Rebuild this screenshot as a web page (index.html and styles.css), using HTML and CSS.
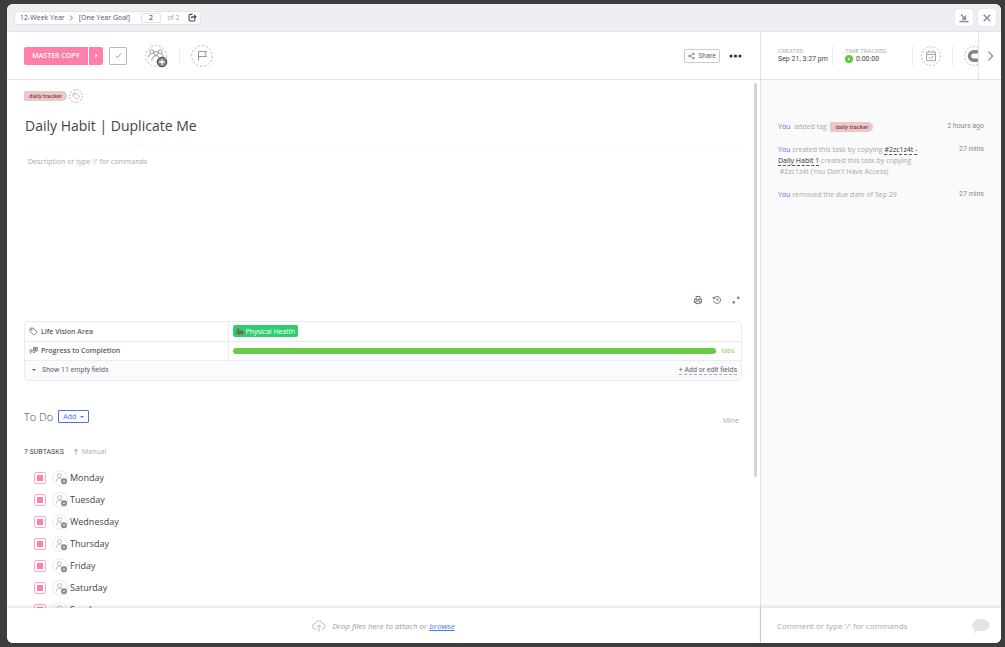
FILE: index.html
```html
<!DOCTYPE html>
<html lang="en">
<head>
    <meta charset="UTF-8">
    <meta name="viewport" content="width=device-width, initial-scale=1.0">
    <title>Daily Habit | Duplicate Me</title>
    <link rel="stylesheet" href="styles.css">
</head>
<body>
    <!-- Shared icons -->
    <svg class="sprite" aria-hidden="true">
        <symbol id="person" viewBox="0 0 16 16">
            <circle cx="8" cy="8" r="7.3" stroke="#cfcfcf" stroke-dasharray="1.6 1.3" stroke-width=".8"/>
            <circle cx="7.5" cy="5.6" r="2" stroke="#b5b5b5" stroke-width=".9"/>
            <path d="M4.4 11.5c0-2 1.2-3.4 3.1-3.4 1 0 1.9.4 2.4 1.1" stroke="#b5b5b5" stroke-width=".9"/>
            <circle cx="12" cy="11.2" r="3" fill="#858585"/>
            <path d="M12 9.7v3M10.5 11.2h3" stroke="#ddd" stroke-width=".9"/>
        </symbol>
        <symbol id="tag" viewBox="0 0 16 16">
            <path d="M1.5 3.2v4.3l6.8 6.3c.5.5 1.2.5 1.7 0l4-4c.5-.5.5-1.2 0-1.7L7.2 1.900H2.800c-.7 0-1.300.6-1.300 1.300z"/>
            <circle cx="4.8" cy="5" r="1"/>
        </symbol>
    </svg>

    <div class="modal">
        <header class="topbar">
            <nav class="crumbs">
                <a href="#">12-Week Year</a>
                <svg class="crumb-arrow" viewBox="0 0 6 8"><path d="M2 1.500L4.500 4 2 6.500"/></svg>
                <a href="#">[One Year Goal]</a>
                <input class="page-number" type="text" value="2" aria-label="Task number">
                <span class="page-total">of 2</span>
                <button class="icon-btn" aria-label="Move task">
                    <svg class="move-icon" viewBox="0 0 10 10"><path d="M5 1.500H2.500Q1.200 1.500 1.200 2.800v4.700q0 1.300 1.300 1.300h4q1.300 0 1.300-1.300V7M4.300 6V4.300H8.500M6.800 2.200l2 2.100-2 2.100"/></svg>
                </button>
            </nav>
            <div class="window-buttons">
                <button aria-label="Minimize"><svg viewBox="0 0 12 12"><path d="M3 2.500l4 4M7.500 3.500v3.500H4M1.500 9.500h9"/></svg></button>
                <button aria-label="Close"><svg viewBox="0 0 12 12"><path d="M2.700 2.700l6.600 6.600M9.300 2.700L2.700 9.300"/></svg></button>
            </div>
        </header>

        <main class="task">
            <div class="toolbar">
                <div class="status">
                    <button class="status-name">MASTER COPY</button>
                    <button class="status-next" aria-label="Next status"><svg viewBox="0 0 4 6"><path d="M.5.500L3.500 3 .5 5.500z"/></svg></button>
                </div>
                <button class="complete" aria-label="Mark complete"><svg viewBox="0 0 10 10"><path d="M2 5.300l2 2 4-4.800"/></svg></button>
                <button class="icon-btn assignees" aria-label="Assign">
                    <svg viewBox="0 0 26 26">
                        <circle cx="12" cy="13" r="10.500" stroke="#bbb" stroke-dasharray="2.200 1.800"/>
                        <g stroke="#8d8d8d" stroke-width=".9">
                            <circle cx="7.700" cy="8.700" r="1.900"/>
                            <circle cx="16.300" cy="8.700" r="1.900"/>
                            <circle cx="12" cy="10.300" r="2.100"/>
                            <path d="M4.500 14.500c0-2 1-3.400 2.700-3.600M19.500 14.500c0-2-1-3.400-2.700-3.600M7.800 17.500c0-2.800 1.700-4.700 4.200-4.700 1.200 0 2.200.5 3 1.300"/>
                        </g>
                        <circle cx="18" cy="19" r="4.800" fill="#858585"/>
                        <path d="M18 16.300v5.400M15.300 19h5.400" stroke="#fff" stroke-width="1.300"/>
                    </svg>
                </button>
                <span class="divider"></span>
                <button class="icon-btn priority" aria-label="Set priority">
                    <svg viewBox="0 0 22 22">
                        <circle cx="11" cy="11" r="10.300" stroke="#bbb" stroke-dasharray="2.200 1.800"/>
                        <path d="M7.500 15.500v-9h8l-1.600 2.500 1.600 2.500h-8" stroke="#999"/>
                    </svg>
                </button>
                <button class="share">
                    <svg viewBox="0 0 8 8"><circle cx="1.500" cy="4" r="1"/><circle cx="6.300" cy="1.500" r="1"/><circle cx="6.300" cy="6.500" r="1"/><path d="M2.500 3.500l2.900-1.500M2.500 4.500l2.900 1.500"/></svg>
                    Share
                </button>
                <button class="icon-btn more" aria-label="More">
                    <svg viewBox="0 0 14 4"><circle cx="2.200" cy="2" r="1.700"/><circle cx="7" cy="2" r="1.700"/><circle cx="11.800" cy="2" r="1.700"/></svg>
                </button>
            </div>

            <div class="scroll-area">
                <div class="content">
                    <div class="tags">
                        <span class="tag">daily tracker</span>
                        <button class="icon-btn add-tag" aria-label="Add tag">
                            <svg viewBox="0 0 14 14">
                                <circle cx="7" cy="7" r="6.400" stroke="#aaa" stroke-dasharray="1.800 1.500" stroke-width=".9"/>
                                <use href="#tag" x="3.200" y="3.200" width="8" height="8" stroke="#b5b5b5" stroke-width="1.700"/>
                            </svg>
                        </button>
                    </div>
                    <h1>Daily Habit | Duplicate Me</h1>
                    <textarea class="description" placeholder="Description or type '/' for commands" aria-label="Description"></textarea>

                    <div class="desc-actions">
                        <button class="icon-btn" aria-label="Print"><svg viewBox="0 0 10 10"><path d="M3 4V1.500h4V4M3 7.500H1.400V4.300h7.200v3.200H7M3 6h4v2.600H3z"/></svg></button>
                        <button class="icon-btn" aria-label="History"><svg viewBox="0 0 10 10"><path d="M1.900 3.300A3.500 3.500 0 1 1 1.600 5.800M1.300 1.700v1.900h2M5 3.200v2h1.600"/></svg></button>
                        <button class="icon-btn" aria-label="Expand"><svg viewBox="0 0 10 10"><path d="M6 2.100h2v2M8 2.100L6 4.100M4 8H2V6M2 8l2-2"/></svg></button>
                    </div>

                    <div class="fields">
                        <table>
                            <tr>
                                <th scope="row"><span class="field-name"><svg class="field-icon" viewBox="0 0 16 16"><use href="#tag"/></svg>Life Vision Area</span></th>
                                <td>
                                    <span class="label">
                                        <svg viewBox="0 0 10 8"><path d="M1.500 1L3.500.300l.8 1.200-1.200.8.500 1.400c1.600-1.200 4.600-1.100 5.600.2.900 1.500.4 3.300-1 3.600H2C.8 7.200.4 6 .7 4.500z"/></svg>
                                        Physical Health
                                    </span>
                                </td>
                            </tr>
                            <tr>
                                <th scope="row"><span class="field-name"><svg class="field-icon" viewBox="0 0 16 16"><path d="M4.500 7a2 2 0 1 0 0 3M5.200 6v5M8 2.500h6.500V9H8zM8 5.500h6.500M11.200 2.500V9M1 12.500h3M7 11.500h4"/></svg>Progress to Completion</span></th>
                                <td>
                                    <div class="progress">
                                        <div class="track"><div class="bar" style="width: 100%"></div></div>
                                        <span>100%</span>
                                    </div>
                                </td>
                            </tr>
                        </table>
                        <div class="fields-footer">
                            <button class="show-empty"><span class="caret"></span>Show 11 empty fields</button>
                            <button class="edit-fields">+ Add or edit fields</button>
                        </div>
                    </div>

                    <div class="todo-head">
                        <h2>To Do</h2>
                        <button class="add">Add <span class="caret"></span></button>
                        <button class="mine">Mine</button>
                    </div>
                    <div class="subtasks-head">
                        <h3>7 SUBTASKS</h3>
                        <button class="sort"><svg viewBox="0 0 6 8"><path d="M3 6.500V1M.8 3L3 1l2.200 2"/></svg>Manual</button>
                    </div>
                    <ul class="subtasks">
                        <li><input type="checkbox" id="mon" checked><svg><use href="#person"/></svg><label for="mon">Monday</label></li>
                        <li><input type="checkbox" id="tue" checked><svg><use href="#person"/></svg><label for="tue">Tuesday</label></li>
                        <li><input type="checkbox" id="wed" checked><svg><use href="#person"/></svg><label for="wed">Wednesday</label></li>
                        <li><input type="checkbox" id="thu" checked><svg><use href="#person"/></svg><label for="thu">Thursday</label></li>
                        <li><input type="checkbox" id="fri" checked><svg><use href="#person"/></svg><label for="fri">Friday</label></li>
                        <li><input type="checkbox" id="sat" checked><svg><use href="#person"/></svg><label for="sat">Saturday</label></li>
                        <li><input type="checkbox" id="sun" checked><svg><use href="#person"/></svg><label for="sun">Sunday</label></li>
                    </ul>
                </div>
                <div class="scrollbar"><div class="thumb"></div></div>
            </div>

            <footer class="drop">
                <svg viewBox="0 0 14 12"><path d="M4.500 9H3.300a2.600 2.600 0 0 1-.3-5.200 4 4 0 0 1 7.700-.3A2.800 2.800 0 0 1 10.700 9H9.500M7 11.700V5M5 6.800L7 5l2 1.800"/></svg>
                <span>Drop files here to attach or <a href="#">browse</a></span>
            </footer>
        </main>

        <aside class="activity">
            <div class="info">
                <div class="info-item created">
                    <span class="info-label">CREATED</span>
                    <span>Sep 21, 3:27 pm</span>
                </div>
                <div class="info-item tracked">
                    <span class="info-label">TIME TRACKED</span>
                    <span class="time"><svg viewBox="0 0 8 8"><circle cx="4" cy="4" r="4" fill="#5fcb3c"/><path d="M3 2.500L5.300 4 3 5.500z" fill="#fff"/></svg>0:00:00</span>
                </div>
                <button class="icon-btn due" aria-label="Due date">
                    <svg viewBox="0 0 20 20"><circle cx="10" cy="10" r="9.400" stroke="#bbb" stroke-dasharray="2 1.600"/><path d="M5.500 6h9v8.700h-9zM5.500 8.500h9M7.700 4.500v2M12.300 4.500v2M7.800 11.300l1.600 1.500 2.900-2.900" stroke="#a5a5a5"/></svg>
                </button>
                <div class="clip">
                    <svg viewBox="0 0 20 20"><circle cx="10" cy="10" r="9.400" stroke="#bbb" stroke-dasharray="2 1.600"/><rect x="5.500" y="5.800" width="12" height="8.400" rx="4.200" stroke="#858585" stroke-width="3.400"/></svg>
                </div>
                <button class="next" aria-label="Show more"><svg viewBox="0 0 8 12"><path d="M1.500 1l5 5-5 5"/></svg></button>
            </div>
            <ul class="log">
                <li>
                    <p><a href="#">You</a>&nbsp; added tag &nbsp;<span class="tag">daily tracker</span></p>
                    <time>2 hours ago</time>
                </li>
                <li>
                    <p><a href="#">You</a> created this task by copying <a class="task-link" href="#">#2zc1z4t - Daily Habit 1</a> created this task by copying &nbsp;#2zc1z4t (You Don't Have Access)</p>
                    <time>27 mins</time>
                </li>
                <li>
                    <p><a href="#">You</a> removed the due date of Sep 29</p>
                    <time>27 mins</time>
                </li>
            </ul>
            <div class="comment">
                <input type="text" placeholder="Comment or type '/' for commands" aria-label="Comment">
                <svg viewBox="0 0 18 16"><path d="M9 1c4.900 0 8.700 2.700 8.700 6.200S13.900 13 9 13c-1 0-2-.1-2.900-.3-1.300 1.200-2.800 2-4.600 2.300.9-.9 1.300-1.900 1.300-3.400C1.200 10.400.3 8.900.3 7.200.3 3.700 4.100 1 9 1z"/></svg>
            </div>
        </aside>
    </div>
</body>
</html>
```
FILE: styles.css
```css
* {
    box-sizing: border-box;
}

body {
    margin: 0;
    padding: 4px 4px 4px 7px;
    height: 100vh;
    background: #3d3d3d;
    font-family: "Open Sans", "Noto Sans", sans-serif;
    font-size: 7px;
    color: #444;
}

h1, h2, h3, p, ul {
    margin: 0;
    padding: 0;
    font-weight: normal;
}

ul {
    list-style: none;
}

button, input, textarea {
    margin: 0;
    padding: 0;
    border: none;
    background: none;
    font: inherit;
    color: inherit;
}

button {
    cursor: pointer;
}

a {
    color: inherit;
    text-decoration: none;
}

svg {
    display: block;
    flex: none;
    fill: none;
    stroke: currentColor;
}

.sprite {
    display: none;
}

.icon-btn {
    display: flex;
    flex: none;
}

/* Compact labels */
.share, .tag, .info, .fields-footer, .progress, h3, time {
    font-family: Roboto, "Open Sans", sans-serif;
}

.modal {
    display: grid;
    grid-template-columns: 1fr 241px;
    grid-template-rows: 28px 1fr;
    height: 100%;
    background: #fff;
    border-radius: 6px;
    overflow: hidden;
}

/* Top bar */
.topbar {
    grid-column: 1 / -1;
    display: flex;
    align-items: center;
    justify-content: space-between;
    padding: 0 5px 0 7px;
    background: #edeff3;
    border-bottom: 1px solid #e2e4e9;
}

.crumbs {
    display: flex;
    align-items: center;
    height: 14px;
    padding: 0 3px 0 5px;
    background: #fff;
    border: 1px solid #e2e4e9;
    border-radius: 3px;
    color: #4c546a;
}

.crumb-arrow {
    width: 6px;
    height: 8px;
    margin: 0 5px 0 3px;
    stroke-width: 0.8;
}

.page-number {
    width: 20px;
    height: 10px;
    margin: 0 6px 0 11px;
    border: 1px solid #e2e4e9;
    border-radius: 2px;
    text-align: center;
    color: #333;
}

.page-total {
    margin-right: 8px;
    color: #aaa;
}

.move-icon {
    width: 9px;
    height: 9px;
    color: #444;
    stroke-width: 1.2;
}

.window-buttons {
    display: flex;
    gap: 5px;
}

.window-buttons button {
    display: grid;
    place-items: center;
    width: 18px;
    height: 17px;
    background: #fff;
    border-radius: 3px;
    box-shadow: 0 0 1px #bbc;
    color: #7c869c;
}

.window-buttons svg {
    width: 12px;
    height: 12px;
    stroke-width: 1.3;
}

/* Task column */
.task, .activity {
    display: flex;
    flex-direction: column;
    min-width: 0;
    min-height: 0;
}

.toolbar {
    display: flex;
    flex: none;
    align-items: center;
    height: 48px;
    padding: 0 18px 0 17px;
    border-bottom: 1px solid #e4e4e7;
}

.status {
    display: flex;
    gap: 1px;
    height: 18px;
    margin-right: 6px;
    color: #fff;
    font-weight: 600;
}

.status button {
    background: #ff7fab;
}

.status .status-name {
    width: 64px;
    border-radius: 2px 0 0 2px;
}

.status .status-next {
    display: grid;
    place-items: center;
    width: 14px;
    border-radius: 0 2px 2px 0;
}

.status svg {
    width: 3px;
    height: 5px;
    fill: #fff;
    stroke: none;
}

.complete {
    display: grid;
    place-items: center;
    width: 18px;
    height: 18px;
    margin-right: 17px;
    border: 1px solid #b9b9b9;
    border-radius: 1px;
    color: #999;
}

.complete svg {
    width: 9px;
    height: 9px;
}

.assignees svg {
    width: 26px;
    height: 26px;
}

.divider {
    width: 1px;
    height: 16px;
    margin: 0 11px 0 9px;
    background: #eee;
}

.priority svg {
    width: 22px;
    height: 22px;
}

.share {
    display: flex;
    align-items: center;
    gap: 3px;
    height: 14px;
    margin: 0 9px 0 auto;
    padding: 0 3px;
    border: 1px solid #c5cbd9;
    border-radius: 2px;
    color: #666;
}

.share svg {
    width: 7px;
    height: 8px;
    stroke-width: 0.8;
}

.more svg {
    width: 13px;
    height: 4px;
    fill: #333;
    stroke: none;
}

.scroll-area {
    display: flex;
    flex: 1;
    min-height: 0;
}

.content {
    flex: 1;
    padding: 9px 12px 0 17px;
    overflow: hidden;
}

.scrollbar {
    width: 6px;
    padding-top: 3px;
}

.thumb {
    width: 3px;
    height: 75%;
    border-radius: 2px;
    background: #d5d5d5;
}

.tags {
    display: flex;
    align-items: center;
    gap: 2px;
    height: 14px;
}

.tag {
    display: inline-block;
    padding: 0 5px;
    border-radius: 1px 5px 5px 1px;
    background: #e8c8ca;
    color: #973a40;
    font-size: 6px;
    font-weight: 500;
    line-height: 10px;
}

.add-tag svg {
    width: 14px;
    height: 14px;
}

h1 {
    padding: 12px 0 8px 1px;
    border-bottom: 1px solid #fafafa;
    font-size: 14px;
    line-height: 22px;
    color: #444;
}

.description {
    display: block;
    width: 100%;
    height: 140px;
    padding: 11px 4px;
    resize: none;
    line-height: 10px;
}

::placeholder {
    color: #aaa;
}

.desc-actions {
    display: flex;
    justify-content: flex-end;
    gap: 9px;
    padding: 9px 1px 16px;
    color: #6c7280;
}

.desc-actions svg {
    width: 10px;
    height: 10px;
}

/* Custom fields */
.fields {
    border: 1px solid #e9ebf0;
    border-radius: 3px;
    color: #5a5a5a;
}

.fields table {
    width: 100%;
    border-collapse: collapse;
}

.fields tr {
    height: 19px;
    border-bottom: 1px solid #e9ebf0;
}

.fields th {
    width: 203px;
    padding: 0 0 0 4px;
    border-right: 1px solid #e9ebf0;
    font-weight: 600;
}

.fields td {
    padding: 0 6px 0 4px;
}

.field-name {
    display: flex;
    align-items: center;
    gap: 3px;
}

.field-icon {
    width: 9px;
    height: 9px;
    stroke-width: 1.3;
}

.label {
    display: flex;
    align-items: center;
    gap: 2px;
    width: fit-content;
    height: 12px;
    padding: 0 3px;
    border-radius: 2px;
    background: #2ecd6f;
    color: #fff;
    font-weight: 500;
}

.label svg {
    width: 8px;
    height: 7px;
    fill: #8b5a4a;
    stroke: none;
}

.progress {
    display: flex;
    align-items: center;
    gap: 4px;
    color: #67cb48;
    font-size: 6px;
}

.track {
    flex: 1;
    height: 6px;
    border-radius: 3px;
    background: #eee;
}

.bar {
    height: 100%;
    border-radius: 3px;
    background: #67cb48;
}

.fields-footer {
    display: flex;
    align-items: center;
    justify-content: space-between;
    height: 19px;
    padding: 0 4px 0 7px;
    background: #fafbfc;
    color: #5c616c;
}

.show-empty {
    display: flex;
    align-items: center;
    gap: 6px;
}

.caret {
    display: inline-block;
    border: 2px solid transparent;
    border-top-color: currentColor;
    border-bottom: none;
}

.edit-fields {
    border-bottom: 1px dashed #aaa;
}

/* Subtasks */
.todo-head {
    display: flex;
    align-items: center;
    gap: 5px;
    margin: 28px 0 20px;
}

h2 {
    font-size: 11px;
    font-weight: 300;
    line-height: 16px;
}

.add {
    display: flex;
    align-items: center;
    gap: 4px;
    height: 13px;
    padding: 0 4px;
    border: 1px solid #4a74e8;
    border-radius: 1px;
    color: #4a74e8;
}

.mine {
    align-self: flex-end;
    margin-left: auto;
    padding-right: 3px;
    color: #aaa;
}

.subtasks-head {
    display: flex;
    align-items: center;
    gap: 9px;
    height: 14px;
    margin-bottom: 8px;
}

h3 {
    font-size: 7px;
}

.sort {
    display: flex;
    align-items: center;
    gap: 3px;
    color: #aaa;
}

.sort svg {
    width: 6px;
    height: 8px;
}

.subtasks li {
    display: flex;
    align-items: center;
    height: 22px;
    padding-left: 10px;
    font-size: 9px;
}

.subtasks input {
    appearance: none;
    width: 12px;
    height: 12px;
    margin-right: 6px;
    padding: 2px;
    border: 1px solid #ffa6c4;
    border-radius: 2px;
}

.subtasks input:checked {
    background: #ff7fab content-box;
}

.subtasks svg {
    width: 16px;
    height: 16px;
    margin-right: 2px;
    stroke: none;
}

/* Footers */
.drop, .comment {
    display: flex;
    flex: none;
    align-items: center;
    height: 35px;
    background: #fff;
    box-shadow: 0 -1px 4px rgba(0, 0, 0, 0.14);
    font-size: 8px;
    z-index: 1;
}

.drop {
    justify-content: center;
    gap: 6px;
    font-style: italic;
    color: #999;
}

.drop svg {
    width: 14px;
    height: 12px;
    color: #b8bbd4;
}

.drop a {
    color: #4a74e8;
    text-decoration: underline;
}

.comment {
    justify-content: space-between;
    padding: 0 11px 0 16px;
}

.comment input {
    flex: 1;
}

.comment svg {
    width: 18px;
    height: 16px;
    fill: #e4e4e4;
    stroke: none;
}

/* Activity column */
.activity {
    background: #fafafa;
    border-left: 1px solid #e1e1e4;
}

.info {
    display: flex;
    flex: none;
    align-items: center;
    height: 48px;
    padding-left: 17px;
    background: #fff;
    border-bottom: 1px solid #e4e4e7;
}

.info-item {
    display: flex;
    flex-direction: column;
    height: 20px;
    border-right: 1px solid #eee;
    line-height: 9px;
    white-space: nowrap;
}

.info-label {
    color: #b0b0b0;
    font-size: 6px;
}

.created {
    width: 55px;
}

.tracked {
    width: 80px;
    padding-left: 12px;
}

.time {
    display: flex;
    align-items: center;
    gap: 3px;
}

.time svg {
    width: 8px;
    height: 8px;
    stroke: none;
}

.due {
    margin: 0 11px 0 8px;
}

.due svg, .clip svg {
    width: 20px;
    height: 20px;
}

.clip {
    flex: 1;
    padding-left: 11px;
    border-left: 1px solid #eee;
    overflow: hidden;
}

.next {
    display: grid;
    place-items: center;
    width: 23px;
    height: 100%;
    border-left: 1px solid #e4e4e7;
    color: #7c869c;
}

.next svg {
    width: 7px;
    height: 12px;
    stroke-width: 1.3;
}

.log {
    display: flex;
    flex: 1;
    flex-direction: column;
    gap: 12px;
    padding: 41px 17px 0;
    color: #a8a8a8;
    line-height: 11px;
}

.log li {
    display: flex;
    justify-content: space-between;
}

.log p {
    width: 152px;
}

.log a {
    color: #4a74e8;
}

.log .task-link {
    border-bottom: 1px dashed #555;
    color: #333;
}

.log time {
    color: #888;
}
```
